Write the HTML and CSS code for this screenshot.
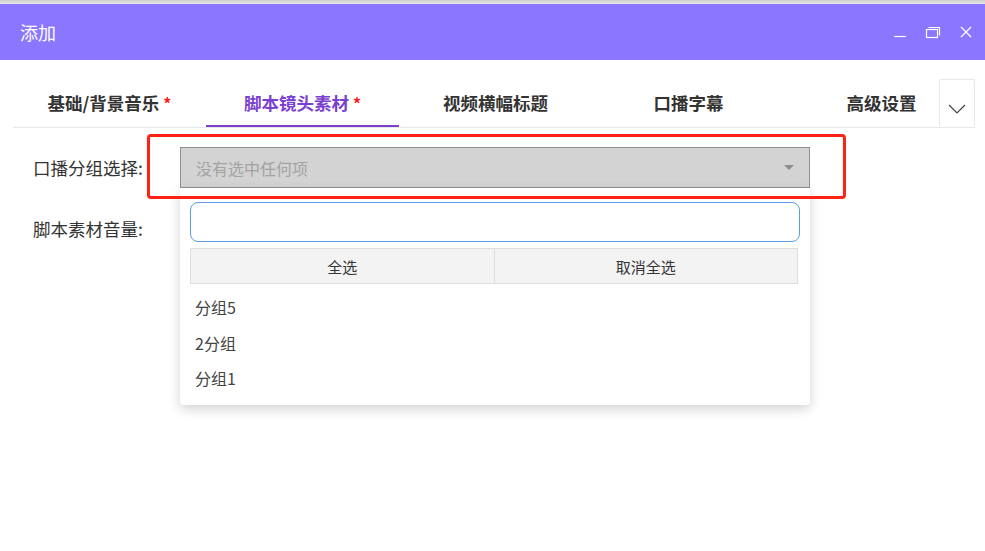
FILE: index.html
```html
<!DOCTYPE html>
<html lang="zh-CN">
<head>
    <meta charset="UTF-8">
    <meta name="viewport" content="width=device-width, initial-scale=1.0">
    <title>添加</title>
    <link rel="stylesheet" href="styles.css">
</head>
<body>
    <div class="topline"></div>
    <div class="header">
        <div class="title">添加</div>
        <div class="win-tools">
            <svg class="win-btn" width="14" height="14" viewBox="0 0 14 14"><line x1="1" y1="11.5" x2="13" y2="11.5" stroke="#fff" stroke-width="1.2"/></svg>
            <svg class="win-btn" width="16" height="14" viewBox="0 0 16 14"><rect x="1.5" y="4.5" width="11" height="8" fill="none" stroke="#fff" stroke-width="1.2"/><polyline points="3.5,2.5 14.5,2.5 14.5,10.5" fill="none" stroke="#fff" stroke-width="1.2"/></svg>
            <svg class="win-btn" width="14" height="14" viewBox="0 0 14 14"><path d="M2 2 L12 12 M12 2 L2 12" stroke="#fff" stroke-width="1.3"/></svg>
        </div>
    </div>

    <div class="tabs">
        <div class="tab-list">
            <div class="tab">基础/背景音乐<span class="req">*</span></div>
            <div class="tab active">脚本镜头素材<span class="req">*</span></div>
            <div class="tab">视频横幅标题</div>
            <div class="tab">口播字幕</div>
            <div class="tab">高级设置</div>
        </div>
        <div class="tab-more">
            <svg width="18" height="10" viewBox="0 0 18 10"><polyline points="1,1 9,9 17,1" fill="none" stroke="#444" stroke-width="1.2"/></svg>
        </div>
    </div>

    <div class="form">
        <div class="row">
            <label>口播分组选择:</label>
            <div class="select-wrap">
                <div class="select">
                    <span class="placeholder">没有选中任何项</span>
                    <span class="caret"></span>
                </div>
                <div class="dropdown">
                    <div class="search"><input type="text"></div>
                    <div class="actions">
                        <button>全选</button>
                        <button>取消全选</button>
                    </div>
                    <ul class="options">
                        <li>分组5</li>
                        <li>2分组</li>
                        <li>分组1</li>
                    </ul>
                </div>
            </div>
        </div>
        <div class="row">
            <label>脚本素材音量:</label>
        </div>
        <div class="highlight"></div>
    </div>
</body>
</html>
```

FILE: styles.css
```css
html, body {
    height: 100%;
}

body {
    margin: 0;
    padding: 0;
    background: #fff;
    font-family: "Noto Sans CJK SC", "Noto Sans", sans-serif;
    color: #333;
}

.topline {
    height: 4px;
    background: linear-gradient(#cfcfcf, #e4e4e4);
}

.header {
    height: 56px;
    background: #8a76ff;
    display: flex;
    align-items: center;
    justify-content: space-between;
    padding: 0 12px 0 20px;
}

.title {
    color: #fff;
    font-size: 18px;
}

.win-tools {
    display: flex;
    align-items: center;
    gap: 18px;
}

.win-btn {
    display: block;
}

/* 标签栏 */
.tabs {
    position: relative;
    margin: 19px 10px 0 13px;
    border-bottom: 1px solid #e8e8e8;
    overflow: hidden;
}

.tab-list {
    display: flex;
}

.tab {
    flex: 0 0 193px;
    height: 46px;
    line-height: 48px;
    text-align: center;
    font-size: 17.5px;
    font-weight: bold;
    color: #333;
    border-bottom: 2px solid transparent;
    white-space: nowrap;
}

.tab.active {
    color: #7b3fd0;
    border-bottom-color: #7b3fd0;
}

.req {
    color: #ff1a1a;
    margin-left: 4px;
    font-size: 16px;
}

.tab-more {
    position: absolute;
    right: 0;
    top: 0;
    width: 36px;
    height: 47px;
    background: #fff;
    border: 1px solid #e8e8e8;
    border-bottom: none;
    border-radius: 2px 2px 0 0;
    display: flex;
    align-items: center;
    justify-content: center;
    padding-top: 12px;
    box-sizing: border-box;
}

/* 表单 */
.form {
    position: relative;
    padding: 19px 0 0 33px;
}

.row {
    display: flex;
    align-items: flex-start;
    margin-bottom: 20px;
}

.row label {
    width: 147px;
    font-size: 17.5px;
    line-height: 41px;
    color: #333;
}

.select-wrap {
    position: relative;
    width: 630px;
}

.select {
    height: 41px;
    background: #d3d3d3;
    border: 1px solid #909090;
    box-sizing: border-box;
    display: flex;
    align-items: center;
    justify-content: space-between;
    padding: 0 15px;
}

.placeholder {
    font-size: 16px;
    color: #a2a2a2;
}

.caret {
    width: 0;
    height: 0;
    border-left: 5px solid transparent;
    border-right: 5px solid transparent;
    border-top: 5px solid #8c8c8c;
}

.dropdown {
    position: absolute;
    left: 0;
    top: 41px;
    width: 630px;
    background: #fff;
    box-shadow: 0 4px 12px rgba(0, 0, 0, 0.18);
    border-radius: 0 0 4px 4px;
    padding: 14px 10px 8px;
    box-sizing: border-box;
    z-index: 5;
}

.search input {
    display: block;
    width: 610px;
    height: 40px;
    box-sizing: border-box;
    border: 1px solid #5b9be8;
    border-radius: 8px;
    outline: none;
}

.actions {
    display: flex;
    margin-top: 6px;
    width: 608px;
    border: 1px solid #dedede;
    box-sizing: border-box;
    background: #f3f3f3;
}

.actions button {
    flex: 1;
    height: 34px;
    border: none;
    background: transparent;
    font-family: inherit;
    font-size: 15px;
    color: #333;
}

.actions button + button {
    border-left: 1px solid #dedede;
}

.options {
    list-style: none;
    margin: 6px 0 0;
    padding: 0;
}

.options li {
    height: 35.5px;
    line-height: 35.5px;
    padding-left: 5px;
    font-size: 16px;
    color: #444;
}

.highlight {
    position: absolute;
    left: 147px;
    top: 6px;
    width: 699px;
    height: 65px;
    border: 3px solid #ff2214;
    border-radius: 4px;
    box-sizing: border-box;
    z-index: 6;
}
```
